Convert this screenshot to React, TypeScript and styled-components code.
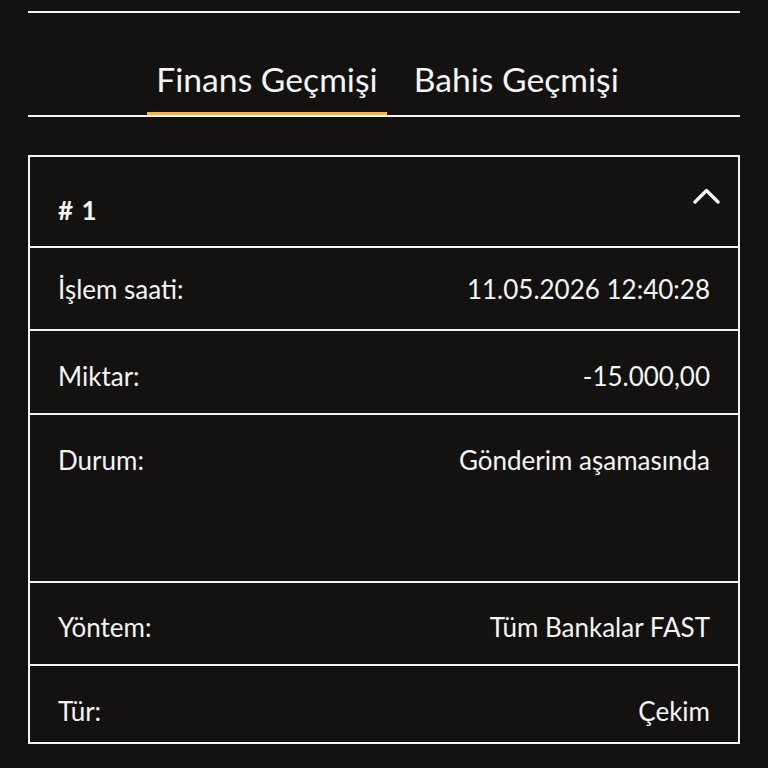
import React from "react";
import styled, { createGlobalStyle } from "styled-components";

const Global = createGlobalStyle`
  html, body {
    margin: 0;
    padding: 0;
    background: #131211;
    color: #f4f4f4;
    font-family: Lato, "Open Sans", "Noto Sans", sans-serif;
  }
  * { box-sizing: border-box; }
`;

const Page = styled.div`
  padding: 0 28px;
`;

const Rule = styled.div`
  margin-top: 11px;
  height: 2px;
  background: #f4f4f4;
`;

const TabBar = styled.div`
  margin-top: 46px;
  display: flex;
  justify-content: center;
  gap: 18px;
  padding-left: 7px;
  border-bottom: 2px solid #f4f4f4;
`;

const Tab = styled.button<{ $active?: boolean }>`
  background: none;
  border: none;
  border-bottom: 3px solid ${(p) => (p.$active ? "#f2b843" : "transparent")};
  padding: 0 9px 12px;
  font-family: Lato, "Open Sans", sans-serif;
  font-size: 33.7px;
  line-height: 41px;
  color: #f4f4f4;
  cursor: pointer;
`;

const Card = styled.div`
  margin-top: 38px;
  border: 2px solid #f4f4f4;
`;

const Header = styled.div`
  height: 89px;
  display: flex;
  justify-content: space-between;
  align-items: flex-start;
  padding: 0 18px 0 28px;
`;

const Title = styled.div`
  margin-top: 38px;
  font-size: 26px;
  font-weight: 700;
  line-height: 1.2;
  word-spacing: 2px;
`;

const Chevron = styled.svg`
  margin-top: 30px;
  width: 27px;
  height: 17px;
`;

const Row = styled.div<{ $height: number; $top: number }>`
  height: ${(p) => p.$height}px;
  border-top: 2px solid #f4f4f4;
  display: flex;
  justify-content: space-between;
  align-items: flex-start;
  padding: ${(p) => p.$top}px 28px 0;
  font-size: 26px;
  line-height: 1.2;
`;

const Label = styled.span``;
const Value = styled.span`
  text-align: right;
`;

const rows = [
  { label: "İşlem saati:", value: "11.05.2026 12:40:28", height: 83, top: 26 },
  { label: "Miktar:", value: "-15.000,00", height: 84, top: 30 },
  { label: "Durum:", value: "Gönderim aşamasında", height: 168, top: 30 },
  { label: "Yöntem:", value: "Tüm Bankalar FAST", height: 83, top: 29 },
  { label: "Tür:", value: "Çekim", height: 78, top: 30 },
];

export default function App() {
  return (
    <Page>
      <Global />
      <Rule />
      <TabBar>
        <Tab $active>Finans Geçmişi</Tab>
        <Tab>Bahis Geçmişi</Tab>
      </TabBar>
      <Card>
        <Header>
          <Title># 1</Title>
          <Chevron viewBox="0 0 27 17" fill="none">
            <polyline
              points="2,15 13.5,3.5 25,15"
              stroke="#f4f4f4"
              strokeWidth="3.4"
              strokeLinecap="round"
              strokeLinejoin="round"
            />
          </Chevron>
        </Header>
        {rows.map((r) => (
          <Row key={r.label} $height={r.height} $top={r.top}>
            <Label>{r.label}</Label>
            <Value>{r.value}</Value>
          </Row>
        ))}
      </Card>
    </Page>
  );
}
